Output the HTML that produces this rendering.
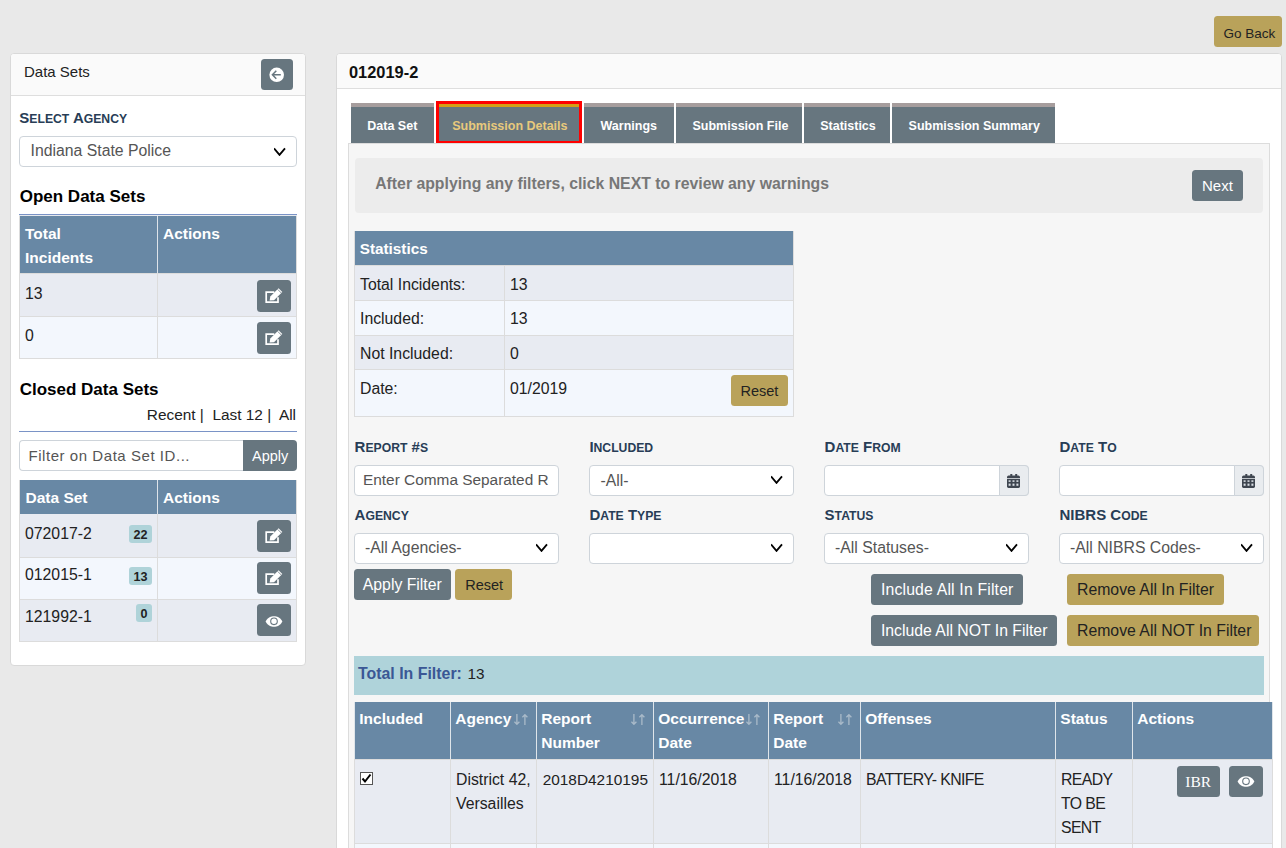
<!DOCTYPE html>
<html><head><meta charset="utf-8"><style>
html,body{margin:0;padding:0;}
body{width:1286px;height:848px;overflow:hidden;background:#e9e9e9;position:relative;font-family:"Liberation Sans",sans-serif;}
body>div,body>span,body>svg{position:absolute;}
body>span{line-height:1;white-space:nowrap;}
</style></head><body>
<div style="left:1214px;top:16px;width:68px;height:31px;background:#b9a25a;border-radius:3.5px;"></div>
<span style="left:1223.5px;top:26.57px;font-size:13.5px;color:#222;">Go Back</span>
<div style="left:10px;top:53px;width:296px;height:613px;background:#fff;border:1px solid #d9d9d9;border-radius:4px;box-sizing:border-box;"></div>
<div style="left:11px;top:54px;width:294px;height:41px;background:#fafafa;border-bottom:1px solid #dedede;border-radius:3px 3px 0 0;"></div>
<span style="left:24px;top:64.30px;font-size:15px;color:#222;">Data Sets</span>
<div style="left:261px;top:59px;width:32px;height:31px;background:#67767f;border-radius:3.5px;"></div>
<svg style="left:261px;top:59px" width="32" height="32" viewBox="0 0 32 32"><circle cx="15.7" cy="15.8" r="7.3" fill="#fff"/><path d="M19.8 15.8 H12.3 M15.3 11.8 L11.4 15.8 L15.3 19.8" fill="none" stroke="#67767f" stroke-width="1.5"/></svg>
<span style="left:19.3px;top:110.00px;font-size:15px;font-weight:bold;color:#283d56">S<span style="font-size:12.2px">ELECT</span><span style="font-size:15px"> </span>A<span style="font-size:12.2px">GENCY</span></span>
<div style="left:19px;top:136px;width:278px;height:31px;background:#fff;border:1px solid #ced4da;border-radius:4px;box-sizing:border-box;"></div>
<span style="left:30.5px;top:143.33px;font-size:15.8px;color:#555;">Indiana State Police</span>
<svg style="left:274px;top:147px" width="12" height="9" viewBox="0 0 12 9"><path d="M0 1.4 L5.5 7.9 L11 1.4" fill="none" stroke="#000" stroke-width="1.8"/></svg>
<span style="left:19.7px;top:188.41px;font-size:17px;font-weight:bold;color:#000;">Open Data Sets</span>
<div style="left:19px;top:214px;width:278px;height:1px;background:#7a93c6;"></div>
<div style="left:19px;top:215px;width:278px;height:1px;background:#e6e9ee;"></div>
<div style="left:19px;top:216px;width:278px;height:143px;background:#dcdcdc;"></div>
<div style="left:20px;top:216px;width:137px;height:57px;background:#6888a5;"></div>
<div style="left:158px;top:216px;width:138px;height:57px;background:#6888a5;"></div>
<div style="left:157px;top:216px;width:1px;height:57px;background:#dde3ea;"></div>
<span style="left:25px;top:225.78px;font-size:15.5px;font-weight:bold;color:#fff;">Total</span>
<span style="left:25px;top:249.78px;font-size:15.5px;font-weight:bold;color:#fff;">Incidents</span>
<span style="left:163px;top:225.78px;font-size:15.5px;font-weight:bold;color:#fff;">Actions</span>
<div style="left:20px;top:274px;width:137px;height:42px;background:#e8ebf2;"></div>
<div style="left:158px;top:274px;width:138px;height:42px;background:#e8ebf2;"></div>
<div style="left:20px;top:317px;width:137px;height:41px;background:#f3f7fd;"></div>
<div style="left:158px;top:317px;width:138px;height:41px;background:#f3f7fd;"></div>
<span style="left:25px;top:285.63px;font-size:15.8px;color:#222;">13</span>
<span style="left:25px;top:327.63px;font-size:15.8px;color:#222;">0</span>
<div style="left:257px;top:280px;width:34px;height:32px;background:#67767f;border-radius:3.5px;"></div>
<svg style="left:257px;top:280px" width="34" height="32" viewBox="0 0 34 32"><path d="M17.3 12.2 H9.2 V22.2 H21 V17.2" fill="none" stroke="#fff" stroke-width="1.7"/><path d="M12.6 20.4 L13.3 16.6 L21.6 8.3 L25.3 12 L17 20.3 Z" fill="#fff"/><path d="M20.6 9.3 L24.3 13" stroke="#67767f" stroke-width="0.8"/></svg>
<div style="left:257px;top:322px;width:34px;height:32px;background:#67767f;border-radius:3.5px;"></div>
<svg style="left:257px;top:322px" width="34" height="32" viewBox="0 0 34 32"><path d="M17.3 12.2 H9.2 V22.2 H21 V17.2" fill="none" stroke="#fff" stroke-width="1.7"/><path d="M12.6 20.4 L13.3 16.6 L21.6 8.3 L25.3 12 L17 20.3 Z" fill="#fff"/><path d="M20.6 9.3 L24.3 13" stroke="#67767f" stroke-width="0.8"/></svg>
<span style="left:19.7px;top:381.31px;font-size:17px;font-weight:bold;color:#000;">Closed Data Sets</span>
<span style="left:100px;top:406px;width:196px;text-align:right;font-size:15.4px;line-height:18px;color:#222;white-space:pre">Recent |  Last 12 |  All</span>
<div style="left:19px;top:431px;width:278px;height:1px;background:#7a93c6;"></div>
<div style="left:19px;top:440px;width:225px;height:31px;background:#fff;border:1px solid #ced4da;border-right:0;border-radius:4px 0 0 4px;box-sizing:border-box;"></div>
<span style="left:28.5px;top:448.30px;font-size:15px;color:#555;letter-spacing:0.55px;">Filter on Data Set ID...</span>
<div style="left:243px;top:440px;width:54px;height:31px;background:#67767f;border-radius:0 4px 4px 0;"></div>
<span style="left:252px;top:448.73px;font-size:14.5px;color:#fff;">Apply</span>
<div style="left:19px;top:480px;width:278px;height:162px;background:#dcdcdc;"></div>
<div style="left:20px;top:480px;width:137px;height:34px;background:#6888a5;"></div>
<div style="left:158px;top:480px;width:138px;height:34px;background:#6888a5;"></div>
<div style="left:157px;top:480px;width:1px;height:34px;background:#dde3ea;"></div>
<span style="left:25.5px;top:490.18px;font-size:15.5px;font-weight:bold;color:#fff;">Data Set</span>
<span style="left:163px;top:490.18px;font-size:15.5px;font-weight:bold;color:#fff;">Actions</span>
<div style="left:20px;top:514px;width:137px;height:43px;background:#e8ebf2;"></div>
<div style="left:158px;top:514px;width:138px;height:43px;background:#e8ebf2;"></div>
<span style="left:25px;top:525.63px;font-size:15.8px;color:#222;">072017-2</span>
<div style="left:129px;top:525px;width:23px;height:18px;background:#afd3d9;border-radius:3px;"></div>
<span style="left:129px;top:525px;width:23px;height:18px;line-height:20px;text-align:center;font-size:12.6px;font-weight:bold;color:#222;">22</span>
<div style="left:20px;top:558px;width:137px;height:41px;background:#f3f7fd;"></div>
<div style="left:158px;top:558px;width:138px;height:41px;background:#f3f7fd;"></div>
<span style="left:25px;top:567.33px;font-size:15.8px;color:#222;">012015-1</span>
<div style="left:129px;top:567px;width:23px;height:18px;background:#afd3d9;border-radius:3px;"></div>
<span style="left:129px;top:567px;width:23px;height:18px;line-height:20px;text-align:center;font-size:12.6px;font-weight:bold;color:#222;">13</span>
<div style="left:20px;top:600px;width:137px;height:41px;background:#e8ebf2;"></div>
<div style="left:158px;top:600px;width:138px;height:41px;background:#e8ebf2;"></div>
<span style="left:25px;top:609.43px;font-size:15.8px;color:#222;">121992-1</span>
<div style="left:136px;top:604px;width:16px;height:18px;background:#afd3d9;border-radius:3px;"></div>
<span style="left:136px;top:604px;width:16px;height:18px;line-height:20px;text-align:center;font-size:12.6px;font-weight:bold;color:#222;">0</span>
<div style="left:257px;top:520px;width:34px;height:32px;background:#67767f;border-radius:3.5px;"></div>
<svg style="left:257px;top:520px" width="34" height="32" viewBox="0 0 34 32"><path d="M17.3 12.2 H9.2 V22.2 H21 V17.2" fill="none" stroke="#fff" stroke-width="1.7"/><path d="M12.6 20.4 L13.3 16.6 L21.6 8.3 L25.3 12 L17 20.3 Z" fill="#fff"/><path d="M20.6 9.3 L24.3 13" stroke="#67767f" stroke-width="0.8"/></svg>
<div style="left:257px;top:562px;width:34px;height:32px;background:#67767f;border-radius:3.5px;"></div>
<svg style="left:257px;top:562px" width="34" height="32" viewBox="0 0 34 32"><path d="M17.3 12.2 H9.2 V22.2 H21 V17.2" fill="none" stroke="#fff" stroke-width="1.7"/><path d="M12.6 20.4 L13.3 16.6 L21.6 8.3 L25.3 12 L17 20.3 Z" fill="#fff"/><path d="M20.6 9.3 L24.3 13" stroke="#67767f" stroke-width="0.8"/></svg>
<div style="left:257px;top:604px;width:34px;height:32px;background:#67767f;border-radius:3.5px;"></div>
<svg style="left:265px;top:615.5px" width="18" height="11" viewBox="0 0 18 11"><path d="M0.6 5.5 C3 1.2 6 0.3 9 0.3 C12 0.3 15 1.2 17.4 5.5 C15 9.8 12 10.7 9 10.7 C6 10.7 3 9.8 0.6 5.5 Z" fill="#fff"/><circle cx="9" cy="5.3" r="3.3" fill="none" stroke="#67767f" stroke-width="1.1"/></svg>
<div style="left:336px;top:53px;width:946px;height:830px;background:#fff;border:1px solid #d9d9d9;border-radius:4px;box-sizing:border-box;"></div>
<div style="left:337px;top:54px;width:944px;height:34px;background:#fafafa;border-bottom:1px solid #dedede;border-radius:3px 3px 0 0;"></div>
<span style="left:349px;top:63.92px;font-size:16.4px;font-weight:bold;color:#111;">012019-2</span>
<div style="left:351px;top:103px;width:83px;height:4px;background:#a69d9d;"></div>
<div style="left:351px;top:107px;width:83px;height:36px;background:#67767f;"></div>
<span style="left:367.3px;top:120.22px;font-size:12.5px;font-weight:bold;color:#fff;">Data Set</span>
<div style="left:437px;top:103px;width:144px;height:4px;background:#d4a017;"></div>
<div style="left:437px;top:107px;width:144px;height:36px;background:#67767f;"></div>
<span style="left:452.2px;top:120.22px;font-size:12.5px;font-weight:bold;color:#e8c97c;">Submission Details</span>
<div style="left:584px;top:103px;width:90px;height:4px;background:#a69d9d;"></div>
<div style="left:584px;top:107px;width:90px;height:36px;background:#67767f;"></div>
<span style="left:600.5px;top:120.22px;font-size:12.5px;font-weight:bold;color:#fff;">Warnings</span>
<div style="left:676px;top:103px;width:126px;height:4px;background:#a69d9d;"></div>
<div style="left:676px;top:107px;width:126px;height:36px;background:#67767f;"></div>
<span style="left:692.5px;top:120.22px;font-size:12.5px;font-weight:bold;color:#fff;">Submission File</span>
<div style="left:804px;top:103px;width:86px;height:4px;background:#a69d9d;"></div>
<div style="left:804px;top:107px;width:86px;height:36px;background:#67767f;"></div>
<span style="left:820.2px;top:120.22px;font-size:12.5px;font-weight:bold;color:#fff;">Statistics</span>
<div style="left:892px;top:103px;width:163px;height:4px;background:#a69d9d;"></div>
<div style="left:892px;top:107px;width:163px;height:36px;background:#67767f;"></div>
<span style="left:908.6px;top:120.22px;font-size:12.5px;font-weight:bold;color:#fff;">Submission Summary</span>
<div style="left:436px;top:100.5px;width:146px;height:43px;border:3px solid #f00;box-sizing:border-box;"></div>
<div style="left:348px;top:143px;width:922px;height:740px;background:#f6f6f6;border:1px solid #dcdcdc;box-sizing:border-box;"></div>
<div style="left:355px;top:158px;width:908px;height:55px;background:#ececec;border-radius:4px;"></div>
<span style="left:375.2px;top:175.63px;font-size:15.8px;font-weight:bold;color:#777;">After applying any filters, click NEXT to review any warnings</span>
<div style="left:1192px;top:170px;width:51px;height:31px;background:#67767f;border-radius:3.5px;"></div>
<span style="left:1202px;top:178.30px;font-size:15px;color:#fff;">Next</span>
<div style="left:354px;top:231px;width:440px;height:186px;background:#dcdcdc;"></div>
<div style="left:355px;top:231px;width:438px;height:34px;background:#6888a5;"></div>
<span style="left:359.7px;top:241.05px;font-size:15.3px;font-weight:bold;color:#fff;">Statistics</span>
<div style="left:355px;top:265.5px;width:149px;height:34.5px;background:#e8ebf2;"></div>
<div style="left:505px;top:265.5px;width:288px;height:34.5px;background:#e8ebf2;"></div>
<span style="left:360px;top:276.63px;font-size:15.8px;color:#222;">Total Incidents:</span>
<span style="left:510px;top:276.63px;font-size:15.8px;color:#222;">13</span>
<div style="left:355px;top:301px;width:149px;height:34px;background:#f3f7fd;"></div>
<div style="left:505px;top:301px;width:288px;height:34px;background:#f3f7fd;"></div>
<span style="left:360px;top:311.43px;font-size:15.8px;color:#222;">Included:</span>
<span style="left:510px;top:311.43px;font-size:15.8px;color:#222;">13</span>
<div style="left:355px;top:336px;width:149px;height:33px;background:#e8ebf2;"></div>
<div style="left:505px;top:336px;width:288px;height:33px;background:#e8ebf2;"></div>
<span style="left:360px;top:345.63px;font-size:15.8px;color:#222;">Not Included:</span>
<span style="left:510px;top:345.63px;font-size:15.8px;color:#222;">0</span>
<div style="left:355px;top:370px;width:149px;height:46px;background:#f3f7fd;"></div>
<div style="left:505px;top:370px;width:288px;height:46px;background:#f3f7fd;"></div>
<span style="left:360px;top:380.63px;font-size:15.8px;color:#222;">Date:</span>
<span style="left:510px;top:380.63px;font-size:15.8px;color:#222;">01/2019</span>
<div style="left:731px;top:375px;width:57px;height:31px;background:#b9a25a;border-radius:3.5px;"></div>
<span style="left:740.5px;top:383.73px;font-size:14.5px;color:#222;">Reset</span>
<span style="left:354.6px;top:438.60px;font-size:15px;font-weight:bold;color:#283d56">R<span style="font-size:12.2px">EPORT</span><span style="font-size:15px"> </span>#<span style="font-size:12.2px">S</span></span>
<span style="left:354.6px;top:506.70px;font-size:15px;font-weight:bold;color:#283d56">A<span style="font-size:12.2px">GENCY</span></span>
<span style="left:589.4px;top:438.60px;font-size:15px;font-weight:bold;color:#283d56">I<span style="font-size:12.2px">NCLUDED</span></span>
<span style="left:589.4px;top:506.70px;font-size:15px;font-weight:bold;color:#283d56">D<span style="font-size:12.2px">ATE</span><span style="font-size:15px"> </span>T<span style="font-size:12.2px">YPE</span></span>
<span style="left:824.6px;top:438.60px;font-size:15px;font-weight:bold;color:#283d56">D<span style="font-size:12.2px">ATE</span><span style="font-size:15px"> </span>F<span style="font-size:12.2px">ROM</span></span>
<span style="left:824.6px;top:506.70px;font-size:15px;font-weight:bold;color:#283d56">S<span style="font-size:12.2px">TATUS</span></span>
<span style="left:1059.5px;top:438.60px;font-size:15px;font-weight:bold;color:#283d56">D<span style="font-size:12.2px">ATE</span><span style="font-size:15px"> </span>T<span style="font-size:12.2px">O</span></span>
<span style="left:1059.5px;top:506.70px;font-size:15px;font-weight:bold;color:#283d56">NIBRS<span style="font-size:15px"> </span>C<span style="font-size:12.2px">ODE</span></span>
<div style="left:354px;top:465px;width:205px;height:31px;background:#fff;border:1px solid #ced4da;border-radius:4px;box-sizing:border-box;"></div>
<span style="left:363px;top:470px;width:186px;height:20px;overflow:hidden;font-size:15.4px;line-height:20px;color:#555;white-space:nowrap">Enter Comma Separated Report Numbers</span>
<div style="left:589px;top:465px;width:205px;height:31px;background:#fff;border:1px solid #ced4da;border-radius:4px;box-sizing:border-box;"></div>
<span style="left:600.5px;top:472.63px;font-size:15.8px;color:#555;">-All-</span>
<svg style="left:771px;top:475px" width="12" height="9" viewBox="0 0 12 9"><path d="M0 1.4 L5.5 7.9 L11 1.4" fill="none" stroke="#000" stroke-width="1.8"/></svg>
<div style="left:824px;top:465px;width:205px;height:31px;background:#fff;border:1px solid #ced4da;border-radius:4px;box-sizing:border-box;"></div>
<div style="left:999px;top:465px;width:30px;height:31px;background:#e9ecef;border:1px solid #ced4da;border-radius:0 4px 4px 0;box-sizing:border-box;"></div>
<svg style="left:1007px;top:474px" width="13" height="14" viewBox="0 0 13 14"><rect x="3.3" y="0" width="2" height="2" fill="#3f4650"/><rect x="8.2" y="0" width="2" height="2" fill="#3f4650"/><path d="M0 3.2 a1.6 1.6 0 0 1 1.6 -1.6 H11.4 a1.6 1.6 0 0 1 1.6 1.6 V3.9 H0 Z" fill="#3f4650"/><path d="M0 4.8 H13 V12.6 a1.4 1.4 0 0 1 -1.4 1.4 H1.4 a1.4 1.4 0 0 1 -1.4 -1.4 Z" fill="#3f4650"/><g fill="#d8dde3"><rect x="1.6" y="6.3" width="2" height="1.6"/><rect x="5.5" y="6.3" width="2" height="1.6"/><rect x="9.4" y="6.3" width="2" height="1.6"/><rect x="1.6" y="9.6" width="2" height="2.2"/><rect x="5.5" y="9.6" width="2" height="2.2"/><rect x="9.4" y="9.6" width="2" height="2.2"/></g></svg>
<div style="left:1059px;top:465px;width:205px;height:31px;background:#fff;border:1px solid #ced4da;border-radius:4px;box-sizing:border-box;"></div>
<div style="left:1234px;top:465px;width:30px;height:31px;background:#e9ecef;border:1px solid #ced4da;border-radius:0 4px 4px 0;box-sizing:border-box;"></div>
<svg style="left:1242px;top:474px" width="13" height="14" viewBox="0 0 13 14"><rect x="3.3" y="0" width="2" height="2" fill="#3f4650"/><rect x="8.2" y="0" width="2" height="2" fill="#3f4650"/><path d="M0 3.2 a1.6 1.6 0 0 1 1.6 -1.6 H11.4 a1.6 1.6 0 0 1 1.6 1.6 V3.9 H0 Z" fill="#3f4650"/><path d="M0 4.8 H13 V12.6 a1.4 1.4 0 0 1 -1.4 1.4 H1.4 a1.4 1.4 0 0 1 -1.4 -1.4 Z" fill="#3f4650"/><g fill="#d8dde3"><rect x="1.6" y="6.3" width="2" height="1.6"/><rect x="5.5" y="6.3" width="2" height="1.6"/><rect x="9.4" y="6.3" width="2" height="1.6"/><rect x="1.6" y="9.6" width="2" height="2.2"/><rect x="5.5" y="9.6" width="2" height="2.2"/><rect x="9.4" y="9.6" width="2" height="2.2"/></g></svg>
<div style="left:354px;top:533px;width:205px;height:31px;background:#fff;border:1px solid #ced4da;border-radius:4px;box-sizing:border-box;"></div>
<span style="left:365px;top:540.33px;font-size:15.8px;color:#555;">-All Agencies-</span>
<svg style="left:536px;top:543px" width="12" height="9" viewBox="0 0 12 9"><path d="M0 1.4 L5.5 7.9 L11 1.4" fill="none" stroke="#000" stroke-width="1.8"/></svg>
<div style="left:589px;top:533px;width:205px;height:31px;background:#fff;border:1px solid #ced4da;border-radius:4px;box-sizing:border-box;"></div>
<svg style="left:771px;top:543px" width="12" height="9" viewBox="0 0 12 9"><path d="M0 1.4 L5.5 7.9 L11 1.4" fill="none" stroke="#000" stroke-width="1.8"/></svg>
<div style="left:824px;top:533px;width:205px;height:31px;background:#fff;border:1px solid #ced4da;border-radius:4px;box-sizing:border-box;"></div>
<span style="left:835px;top:540.33px;font-size:15.8px;color:#555;">-All Statuses-</span>
<svg style="left:1006px;top:543px" width="12" height="9" viewBox="0 0 12 9"><path d="M0 1.4 L5.5 7.9 L11 1.4" fill="none" stroke="#000" stroke-width="1.8"/></svg>
<div style="left:1059px;top:533px;width:205px;height:31px;background:#fff;border:1px solid #ced4da;border-radius:4px;box-sizing:border-box;"></div>
<span style="left:1070px;top:540.33px;font-size:15.8px;color:#555;">-All NIBRS Codes-</span>
<svg style="left:1241px;top:543px" width="12" height="9" viewBox="0 0 12 9"><path d="M0 1.4 L5.5 7.9 L11 1.4" fill="none" stroke="#000" stroke-width="1.8"/></svg>
<div style="left:354px;top:569px;width:97px;height:31px;background:#67767f;border-radius:3.5px;"></div>
<span style="left:362.8px;top:576.63px;font-size:15.8px;color:#fff;">Apply Filter</span>
<div style="left:455px;top:569px;width:57px;height:31px;background:#b9a25a;border-radius:3.5px;"></div>
<span style="left:465.2px;top:577.73px;font-size:14.5px;color:#222;">Reset</span>
<div style="left:871px;top:574px;width:152px;height:31px;background:#67767f;border-radius:3.5px;"></div>
<span style="left:880.9px;top:581.53px;font-size:15.8px;color:#fff;letter-spacing:0.17px;">Include All In Filter</span>
<div style="left:871px;top:615px;width:186px;height:31px;background:#67767f;border-radius:3.5px;"></div>
<span style="left:880.9px;top:622.53px;font-size:15.8px;color:#fff;">Include All NOT In Filter</span>
<div style="left:1067px;top:574px;width:157px;height:31px;background:#b9a25a;border-radius:3.5px;"></div>
<span style="left:1077px;top:581.53px;font-size:15.8px;color:#222;">Remove All In Filter</span>
<div style="left:1067px;top:615px;width:192px;height:31px;background:#b9a25a;border-radius:3.5px;"></div>
<span style="left:1077px;top:622.53px;font-size:15.8px;color:#222;">Remove All NOT In Filter</span>
<div style="left:354px;top:656px;width:910px;height:39px;background:#afd3da;"></div>
<span style="left:358px;top:665.54px;font-size:15.9px;font-weight:bold;color:#3a5795;">Total In Filter:</span>
<span style="left:467.5px;top:666.05px;font-size:15.3px;color:#222;">13</span>
<div style="left:354px;top:702px;width:919px;height:146px;background:#dcdcdc;"></div>
<div style="left:354px;top:702px;width:97px;height:57px;background:#dfe5ea;"></div>
<div style="left:355px;top:702px;width:95px;height:57px;background:#6888a5;"></div>
<div style="left:355px;top:760px;width:95px;height:83px;background:#e8ebf2;"></div>
<div style="left:355px;top:844px;width:95px;height:10px;background:#f3f7fd;"></div>
<span style="left:359.3px;top:711.48px;font-size:15.5px;font-weight:bold;color:#fff;">Included</span>
<div style="left:450px;top:702px;width:87px;height:57px;background:#dfe5ea;"></div>
<div style="left:451px;top:702px;width:85px;height:57px;background:#6888a5;"></div>
<div style="left:451px;top:760px;width:85px;height:83px;background:#e8ebf2;"></div>
<div style="left:451px;top:844px;width:85px;height:10px;background:#f3f7fd;"></div>
<span style="left:455.3px;top:711.48px;font-size:15.5px;font-weight:bold;color:#fff;">Agency</span>
<div style="left:536px;top:702px;width:118px;height:57px;background:#dfe5ea;"></div>
<div style="left:537px;top:702px;width:116px;height:57px;background:#6888a5;"></div>
<div style="left:537px;top:760px;width:116px;height:83px;background:#e8ebf2;"></div>
<div style="left:537px;top:844px;width:116px;height:10px;background:#f3f7fd;"></div>
<span style="left:541.3px;top:711.48px;font-size:15.5px;font-weight:bold;color:#fff;">Report</span>
<span style="left:541.3px;top:735.38px;font-size:15.5px;font-weight:bold;color:#fff;">Number</span>
<div style="left:653px;top:702px;width:116px;height:57px;background:#dfe5ea;"></div>
<div style="left:654px;top:702px;width:114px;height:57px;background:#6888a5;"></div>
<div style="left:654px;top:760px;width:114px;height:83px;background:#e8ebf2;"></div>
<div style="left:654px;top:844px;width:114px;height:10px;background:#f3f7fd;"></div>
<span style="left:658.3px;top:711.48px;font-size:15.5px;font-weight:bold;color:#fff;">Occurrence</span>
<span style="left:658.3px;top:735.38px;font-size:15.5px;font-weight:bold;color:#fff;">Date</span>
<div style="left:768px;top:702px;width:93px;height:57px;background:#dfe5ea;"></div>
<div style="left:769px;top:702px;width:91px;height:57px;background:#6888a5;"></div>
<div style="left:769px;top:760px;width:91px;height:83px;background:#e8ebf2;"></div>
<div style="left:769px;top:844px;width:91px;height:10px;background:#f3f7fd;"></div>
<span style="left:773.3px;top:711.48px;font-size:15.5px;font-weight:bold;color:#fff;">Report</span>
<span style="left:773.3px;top:735.38px;font-size:15.5px;font-weight:bold;color:#fff;">Date</span>
<div style="left:860px;top:702px;width:196px;height:57px;background:#dfe5ea;"></div>
<div style="left:861px;top:702px;width:194px;height:57px;background:#6888a5;"></div>
<div style="left:861px;top:760px;width:194px;height:83px;background:#e8ebf2;"></div>
<div style="left:861px;top:844px;width:194px;height:10px;background:#f3f7fd;"></div>
<span style="left:865.3px;top:711.48px;font-size:15.5px;font-weight:bold;color:#fff;">Offenses</span>
<div style="left:1055px;top:702px;width:78px;height:57px;background:#dfe5ea;"></div>
<div style="left:1056px;top:702px;width:76px;height:57px;background:#6888a5;"></div>
<div style="left:1056px;top:760px;width:76px;height:83px;background:#e8ebf2;"></div>
<div style="left:1056px;top:844px;width:76px;height:10px;background:#f3f7fd;"></div>
<span style="left:1060.3px;top:711.48px;font-size:15.5px;font-weight:bold;color:#fff;">Status</span>
<div style="left:1132px;top:702px;width:141px;height:57px;background:#dfe5ea;"></div>
<div style="left:1133px;top:702px;width:139px;height:57px;background:#6888a5;"></div>
<div style="left:1133px;top:760px;width:139px;height:83px;background:#e8ebf2;"></div>
<div style="left:1133px;top:844px;width:139px;height:10px;background:#f3f7fd;"></div>
<span style="left:1137.3px;top:711.48px;font-size:15.5px;font-weight:bold;color:#fff;">Actions</span>
<svg style="left:513.6px;top:714px" width="14" height="11" viewBox="0 0 14 11"><g fill="none" stroke="#a9bac9" stroke-width="1.3"><path d="M2.9 0 V10.3 M0.4 7.8 L2.9 10.3 L5.4 7.8"/><path d="M10.9 0.7 V11 M8.4 3.2 L10.9 0.7 L13.4 3.2"/></g></svg>
<svg style="left:630.5px;top:714px" width="14" height="11" viewBox="0 0 14 11"><g fill="none" stroke="#a9bac9" stroke-width="1.3"><path d="M2.9 0 V10.3 M0.4 7.8 L2.9 10.3 L5.4 7.8"/><path d="M10.9 0.7 V11 M8.4 3.2 L10.9 0.7 L13.4 3.2"/></g></svg>
<svg style="left:745.5px;top:714px" width="14" height="11" viewBox="0 0 14 11"><g fill="none" stroke="#a9bac9" stroke-width="1.3"><path d="M2.9 0 V10.3 M0.4 7.8 L2.9 10.3 L5.4 7.8"/><path d="M10.9 0.7 V11 M8.4 3.2 L10.9 0.7 L13.4 3.2"/></g></svg>
<svg style="left:837.7px;top:714px" width="14" height="11" viewBox="0 0 14 11"><g fill="none" stroke="#a9bac9" stroke-width="1.3"><path d="M2.9 0 V10.3 M0.4 7.8 L2.9 10.3 L5.4 7.8"/><path d="M10.9 0.7 V11 M8.4 3.2 L10.9 0.7 L13.4 3.2"/></g></svg>
<svg style="left:360px;top:772px" width="13" height="13" viewBox="0 0 13 13"><rect x="0.5" y="0.5" width="12" height="12" fill="#fff" stroke="#555"/><path d="M2.5 6.5 L5 9.5 L10.5 2.5" fill="none" stroke="#000" stroke-width="2"/></svg>
<span style="left:456px;top:771.63px;font-size:15.8px;color:#222;">District 42,</span>
<span style="left:456px;top:795.63px;font-size:15.8px;color:#222;">Versailles</span>
<span style="left:542.7px;top:772.36px;font-size:15.4px;color:#222;">2018D4210195</span>
<span style="left:659px;top:772.03px;font-size:15.8px;color:#222;">11/16/2018</span>
<span style="left:774px;top:772.03px;font-size:15.8px;color:#222;">11/16/2018</span>
<span style="left:866px;top:772.03px;font-size:15.8px;color:#222;letter-spacing:-0.6px;">BATTERY- KNIFE</span>
<span style="left:1061px;top:771.63px;font-size:15.8px;color:#222;letter-spacing:-0.6px;">READY</span>
<span style="left:1061px;top:795.63px;font-size:15.8px;color:#222;letter-spacing:-0.6px;">TO BE</span>
<span style="left:1061px;top:819.63px;font-size:15.8px;color:#222;letter-spacing:-0.6px;">SENT</span>
<div style="left:1177px;top:766px;width:42.5px;height:31px;background:#67767f;border-radius:3.5px;"></div>
<span style="left:1177px;top:766px;width:42.5px;height:31px;line-height:31px;text-align:center;font-family:'Liberation Serif',serif;font-size:15.5px;color:#fff;">IBR</span>
<div style="left:1229px;top:766px;width:34px;height:31px;background:#67767f;border-radius:3.5px;"></div>
<svg style="left:1237px;top:776.0px" width="18" height="11" viewBox="0 0 18 11"><path d="M0.6 5.5 C3 1.2 6 0.3 9 0.3 C12 0.3 15 1.2 17.4 5.5 C15 9.8 12 10.7 9 10.7 C6 10.7 3 9.8 0.6 5.5 Z" fill="#fff"/><circle cx="9" cy="5.3" r="3.3" fill="none" stroke="#67767f" stroke-width="1.1"/></svg>
</body></html>
